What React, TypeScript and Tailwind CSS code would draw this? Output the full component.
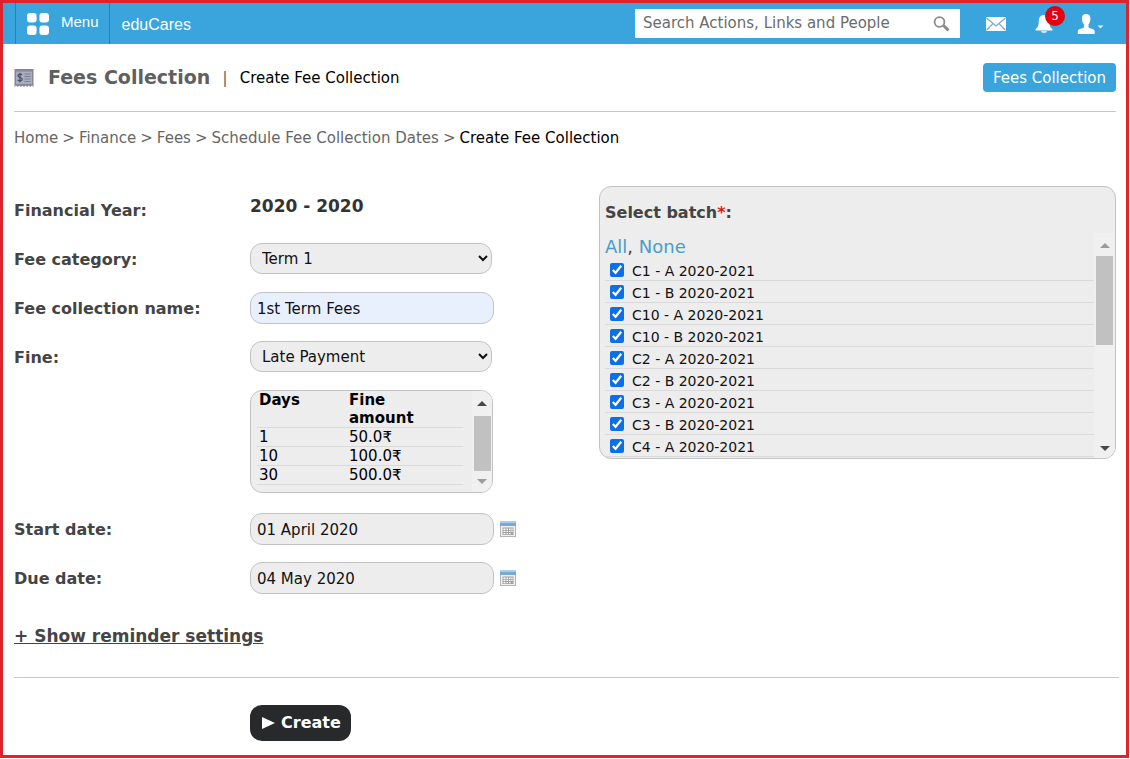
import { useState, type ReactNode } from "react";

const batches = [
  "C1 - A 2020-2021",
  "C1 - B 2020-2021",
  "C10 - A 2020-2021",
  "C10 - B 2020-2021",
  "C2 - A 2020-2021",
  "C2 - B 2020-2021",
  "C3 - A 2020-2021",
  "C3 - B 2020-2021",
  "C4 - A 2020-2021",
];

const fines = [
  { days: "1", amount: "50.0₹" },
  { days: "10", amount: "100.0₹" },
  { days: "30", amount: "500.0₹" },
];

function Triangle({ up, dark }: { up?: boolean; dark?: boolean }) {
  return (
    <svg viewBox="0 0 10 5" className={dark ? "h-[5px] w-2.5 text-[#484848]" : "h-[5px] w-2.5 text-[#9b9b9b]"} aria-hidden="true">
      <path d={up ? "M0 5 5 0l5 5z" : "M0 0h10L5 5z"} fill="currentColor" />
    </svg>
  );
}

function MenuIcon() {
  return (
    <svg viewBox="0 0 22 22" className="size-[22px]" fill="#fff" aria-hidden="true">
      <rect width="9.6" height="9.6" rx="3" />
      <rect x="12.4" width="9.6" height="9.6" rx="3" />
      <rect y="12.4" width="9.6" height="9.6" rx="3" />
      <rect x="12.4" y="12.4" width="9.6" height="9.6" rx="3" />
    </svg>
  );
}

function SearchIcon() {
  return (
    <svg viewBox="0 0 17 16" className="h-4 w-[17px]" fill="none" stroke="#8a8a8a" aria-hidden="true">
      <circle cx="6.5" cy="6" r="4.9" strokeWidth="1.8" />
      <path d="m10.5 9.5 5 4.8" strokeWidth="3" />
    </svg>
  );
}

function MailIcon() {
  return (
    <svg viewBox="0 0 20 14" className="h-3.5 w-5" aria-hidden="true">
      <rect width="20" height="14" rx="1" fill="#fbfdff" />
      <path d="M.5 1 10 9l9.500-8M.8 13 7 6.600M19.200 13 13 6.600" fill="none" stroke="#7fa9c0" strokeWidth="1.300" />
    </svg>
  );
}

function BellIcon() {
  return (
    <svg viewBox="0 0 18 18" className="size-[18px]" fill="#fff" aria-hidden="true">
      <path d="M9 0C5.500 0 3.800 2.500 3.800 6c0 4-.8 6.500-3.300 8.300V15.500h17v-1.200C15 12.500 14.200 10 14.200 6 14.200 2.500 12.500 0 9 0zM6 16.300h6c-.5 2-5.500 2-6 0z" />
    </svg>
  );
}

function UserIcon() {
  return (
    <svg viewBox="0 0 27 20" className="h-5 w-[27px]" fill="#fff" aria-hidden="true">
      <path d="M9 0C6.200 0 4.800 1.800 5 5c.1 2.500.8 4 2 5.500v2.800C6 15 .8 14.500.8 17.500V20h16.900v-2.500c0-3-5.200-2.500-6.200-4.200v-2.800c1.200-1.500 1.800-3 1.900-5.500C13.600 1.800 11.800 0 9 0z" />
      <path d="M20.500 11.500H26.500l-3 3z" opacity=".85" />
    </svg>
  );
}

function ReceiptIcon() {
  return (
    <svg viewBox="0 0 19 18" className="h-[18px] w-5" aria-hidden="true">
      <path d="M0 0h19v18l-1.600-1.500-1.600 1.500-1.600-1.500-1.600 1.500-1.500-1.500L9.500 18l-1.600-1.500L6.300 18l-1.600-1.500L3.100 18l-1.500-1.500L0 18z" fill="#85879a" />
      <path d="M1.500 2.500h16V15h-16z" fill="#a9adbd" />
      <path d="M10 5h6M10 7.500h6M10 10h6M10 12.500h6" stroke="#7d8093" strokeWidth="1" />
      <path d="M7.600 6C6.500 4.700 3.500 4.900 3.500 6.700c0 2.200 4.200 1.300 4.200 3.600 0 2-3.300 2.100-4.500.7M5.500 3.800v9.500" fill="none" stroke="#4a4d64" strokeWidth="1.200" />
    </svg>
  );
}

function CalendarIcon() {
  return (
    <svg viewBox="0 0 16 16" className="size-4" aria-hidden="true">
      <rect x=".5" y=".5" width="15" height="15" fill="#f1f1f1" stroke="#b3b3b3" />
      <rect width="16" height="5" fill="#76a9d4" />
      <rect width="16" height="2" fill="#a9cdec" />
      <rect x="2.500" y="6.500" width="11" height="7.500" fill="#a2a2a2" />
      <path d="M3.500 7.500h2v1.500h-2zM6.500 7.500h1.500v1.500H6.500zM9 7.500h1.500v1.500H9zM11.300 7.500h1.300v1.500h-1.300zM3.500 9.800h2v1.300h-2zM6.500 9.800h1.500v1.300H6.500zM9 9.800h1.500v1.300H9zM11.300 9.800h1.300v1.300h-1.300zM3.500 12h2v1.200h-2zM6.500 12h1.500v1.200H6.500zM9 12h1.500v1.200H9z" fill="#fff" />
    </svg>
  );
}

function Row({ label, htmlFor, children }: { label: string; htmlFor?: string; children: ReactNode }) {
  return (
    <div className="flex">
      <label htmlFor={htmlFor} className="flex h-8 w-[236px] shrink-0 items-center pt-0.5 text-base font-bold text-[#444]">
        {label}
      </label>
      {children}
    </div>
  );
}

const field = "h-8 w-[244px] rounded-xl border border-[#c3c3c3] px-1.5 pt-0.5 text-[15px] text-[#111]";
const select = "h-[31px] w-[242px] rounded-xl border border-[#c3c3c3] bg-[#ededed] px-[7px] text-[15px] text-[#111]";

export default function App() {
  const [checked, setChecked] = useState<string[]>(batches);
  const toggle = (b: string) =>
    setChecked((c) => (c.includes(b) ? c.filter((x) => x !== b) : [...c, b]));

  return (
    <div className="mr-px border-[3px] border-[#dd232b] bg-white font-['DejaVu_Sans',sans-serif] text-[15px] text-black">
      <header className="flex h-[41px] items-center bg-[#3aa4dc] pl-3 font-['Liberation_Sans',sans-serif] text-white">
        <button className="flex h-full items-center border-x border-[#2a81b1] pr-2.5 pl-[11px] text-[15px]">
          <MenuIcon />
          <span className="ml-3 pb-0.5">Menu</span>
        </button>
        <a href="#home" className="ml-3 pt-0.5 text-base">eduCares</a>
        <div className="ml-auto flex h-[29px] w-[325px] items-center bg-white pr-2.5 pl-2 font-['DejaVu_Sans',sans-serif]">
          <input
            type="search"
            aria-label="Search"
            placeholder="Search Actions, Links and People"
            className="min-w-0 flex-1 bg-transparent text-[15px] text-black outline-none placeholder:text-[#6b6b6b]"
          />
          <button aria-label="Submit search"><SearchIcon /></button>
        </div>
        <button aria-label="Messages" className="ml-[26px]"><MailIcon /></button>
        <button aria-label="Notifications" className="relative ml-[29px]">
          <BellIcon />
          <span className="absolute -top-[9px] left-2.5 flex size-5 items-center justify-center rounded-full bg-[#e3000f] font-['DejaVu_Sans',sans-serif] text-xs text-white">5</span>
        </button>
        <button aria-label="Account" className="mr-[22px] ml-6"><UserIcon /></button>
      </header>

      <main className="pr-2.5 pl-[11px]">
        <div className="flex h-[68px] items-center border-b border-[#c8c8c8]">
          <ReceiptIcon />
          <h1 className="ml-3.5 text-[19px] font-bold text-[#5f5f5f]">Fees Collection</h1>
          <span className="mx-3 text-base text-[#666]">|</span>
          <h2 className="pt-0.5">Create Fee Collection</h2>
          <button className="ml-auto flex h-[29px] items-center rounded bg-[#3aa4dc] px-2.5 pt-0.5 text-white">Fees Collection</button>
        </div>

        <nav aria-label="Breadcrumb" className="mt-4 flex h-5 items-center gap-1 text-[#666]">
          <a href="#home">Home</a>
          <span>&gt;</span>
          <a href="#finance">Finance</a>
          <span>&gt;</span>
          <a href="#fees">Fees</a>
          <span>&gt;</span>
          <a href="#schedule">Schedule Fee Collection Dates</a>
          <span>&gt;</span>
          <span className="text-black">Create Fee Collection</span>
        </nav>

        <form onSubmit={(e) => e.preventDefault()}>
          <div className="mt-[38px] flex items-start">
            <div className="flex w-[585px] shrink-0 flex-col gap-[17px] pt-2">
              <div className="flex font-bold">
                <span className="flex h-8 w-[236px] items-center pt-0.5 text-base text-[#444]">Financial Year:</span>
                <span className="flex h-6 items-center pt-0.5 text-[17px] text-[#333]">2020 - 2020</span>
              </div>
              <Row label="Fee category:" htmlFor="category">
                <select id="category" className={select}><option>Term 1</option></select>
              </Row>
              <Row label="Fee collection name:" htmlFor="name">
                <input id="name" defaultValue="1st Term Fees" className={`${field} bg-[#e8f0fe]`} />
              </Row>
              <Row label="Fine:" htmlFor="fine">
                <select id="fine" className={select}><option>Late Payment</option></select>
              </Row>
              <div className="ml-[236px] pb-[3px]">
                <div className="flex h-[103px] w-[243px] overflow-hidden rounded-xl border border-[#c3c3c3] bg-[#ededed]">
                  <div className="flex-1 pl-1.5">
                    <table className="w-[206px] text-left text-[15px]">
                      <thead>
                        <tr className="border-b border-[#dadada] align-top leading-[18px]">
                          <th className="w-[92px] pl-0.5">Days</th>
                          <th className="pr-8">Fine amount</th>
                        </tr>
                      </thead>
                      <tbody>
                        {fines.map((f) => (
                          <tr key={f.days} className="border-b border-[#dadada] leading-[18px]">
                            <td className="pl-0.5">{f.days}</td>
                            <td>{f.amount}</td>
                          </tr>
                        ))}
                      </tbody>
                    </table>
                  </div>
                  <div className="flex w-5 flex-col items-center bg-[#f0f0f0] pt-2.5 pb-2" aria-hidden="true">
                    <Triangle up dark />
                    <div className="mt-2.5 h-[55px] w-[17px] bg-[#c1c1c1]" />
                    <div className="mt-auto"><Triangle /></div>
                  </div>
                </div>
              </div>
              <Row label="Start date:" htmlFor="start">
                <input id="start" defaultValue="01 April 2020" className={`${field} bg-[#ededed]`} />
                <button type="button" aria-label="Pick start date" className="ml-1.5"><CalendarIcon /></button>
              </Row>
              <Row label="Due date:" htmlFor="due">
                <input id="due" defaultValue="04 May 2020" className={`${field} bg-[#ededed]`} />
                <button type="button" aria-label="Pick due date" className="ml-1.5"><CalendarIcon /></button>
              </Row>
            </div>

            <section className="h-[273px] min-w-0 flex-1 overflow-hidden rounded-xl border border-[#c3c3c3] bg-[#ededed] pl-[5px]">
              <h3 className="pt-4 text-base leading-5 font-bold text-[#444]">
                Select batch<span className="text-[#e01b24]">*</span>:
              </h3>
              <div className="mt-2.5 flex">
                <div className="min-w-0 flex-1 pt-0.5">
                  <p className="flex h-6 items-center text-lg text-[#444]">
                    <button type="button" className="text-[#4a9cc8]" onClick={() => setChecked(batches)}>All</button>
                    <span className="whitespace-pre">, </span>
                    <button type="button" className="text-[#4a9cc8]" onClick={() => setChecked([])}>None</button>
                  </p>
                  <ul>
                    {batches.map((b) => (
                      <li key={b} className="border-b border-[#dadada]">
                        <label className="flex h-[21px] gap-2 pl-[5px] text-sm leading-[21px] text-[#111]">
                          <input type="checkbox" checked={checked.includes(b)} onChange={() => toggle(b)} className="mt-1 size-3.5 accent-[#0b6fe8]" />
                          <span className="pt-0.5">{b}</span>
                        </label>
                      </li>
                    ))}
                  </ul>
                </div>
                <div className="flex h-[226px] w-[21px] flex-col items-center bg-[#f0f0f0] pt-2.5 pb-2" aria-hidden="true">
                  <Triangle up />
                  <div className="mt-2 h-[89px] w-[17px] bg-[#c1c1c1]" />
                  <div className="mt-auto"><Triangle dark /></div>
                </div>
              </div>
            </section>
          </div>

          <div className="mt-8 -mr-[3px] border-b border-[#c8c8c8] pb-[31px]">
            <button type="button" className="block text-[17px] leading-5 font-bold text-[#444] underline">+ Show reminder settings</button>
          </div>
          <button type="submit" className="mt-[27px] mb-3.5 ml-[236px] flex h-9 items-center gap-1.5 rounded-xl bg-[#27292a] pr-2.5 pl-3 text-base font-bold text-white">
            <svg viewBox="0 0 13 12" className="h-3 w-[13px]" aria-hidden="true"><path d="M0 0v12l13-6z" fill="#fff" /></svg>
            Create
          </button>
        </form>
      </main>
    </div>
  );
}
